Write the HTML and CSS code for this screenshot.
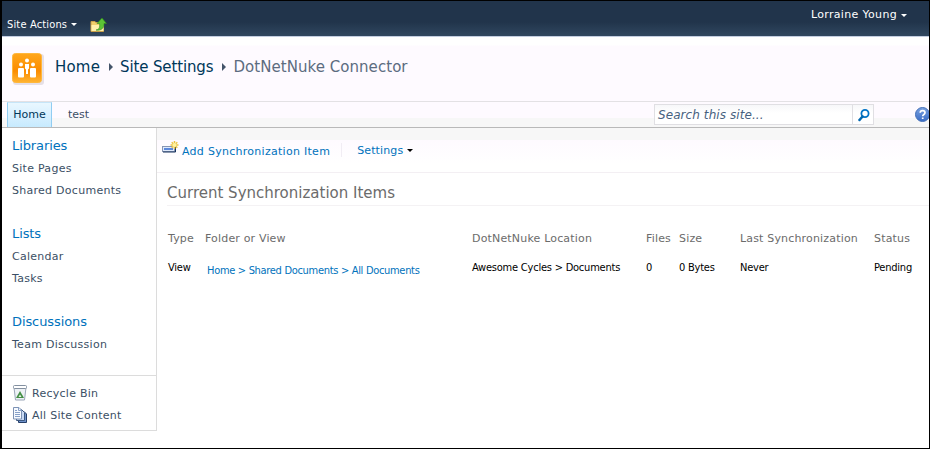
FILE: index.html
```html
<!DOCTYPE html>
<html lang="en">
<head>
<meta charset="utf-8">
<title>DotNetNuke Connector</title>
<link rel="stylesheet" href="styles.css">
</head>
<body>
<div class="window">
  <header class="ribbon">
    <div class="ribbon-left">
      <span class="actions">Site Actions</span><i class="caret"></i>
      <svg class="folder" width="17" height="16" viewBox="0 0 17 16"><path d="M1 4.500h4l1 1h7.500v9H1z" fill="#f0cf6c" stroke="#c8a04a"/><path d="M1.500 8h12v6h-12z" fill="#fff0ac"/><path d="M6 13c3.500-.5 4-3 3.500-6.500H7L12 1l4.500 5.500H14c.5 4.500-3 7.500-8 6.500z" fill="#5cc435" stroke="#2f8a1c" stroke-width=".6"/></svg>
    </div>
    <div class="user"><span>Lorraine Young</span><i class="caret"></i></div>
  </header>
  <div class="title-row">
    <svg class="logo" width="34" height="34" viewBox="0 0 34 34"><defs><linearGradient id="lg" x2="0" y2="1"><stop offset="0" stop-color="#ffa71c"/><stop offset=".6" stop-color="#fb8c00"/><stop offset="1" stop-color="#ffb432"/></linearGradient></defs><rect x="2" y="2" width="31" height="31" rx="3" fill="#e6dfe6"/><rect x="1.500" y="1.500" width="29" height="29" rx="3" fill="url(#lg)" stroke="#ffb73c"/><g fill="#fff"><circle cx="10" cy="12.500" r="2"/><circle cx="22" cy="12.500" r="2"/><circle cx="16" cy="8.500" r="2"/><rect x="7" y="16" width="6" height="9.500" rx="1"/><rect x="19" y="16" width="6" height="9.500" rx="1"/><path d="M14 12h4v4.500l-1 1V22h-2v-4.500l-1-1z"/></g></svg>
    <nav class="crumbs"><a class="c1">Home</a><i class="arrow"></i><a class="c2">Site Settings</a><i class="arrow"></i><span class="c3">DotNetNuke Connector</span></nav>
  </div>
  <div class="tabs">
    <a class="tab active">Home</a><a class="tab test">test</a>
    <div class="search"><span>Search this site...</span><b><svg width="14" height="14" viewBox="0 0 14 14"><circle cx="9" cy="5.500" r="3.600" fill="#fff" stroke="#0072c6" stroke-width="1.800"/><path d="M6.500 8.500 3.500 12" stroke="#0067b0" stroke-width="2.500" stroke-linecap="round"/></svg></b></div>
    <svg class="help" width="14" height="16" viewBox="0 0 14 16"><defs><linearGradient id="hg" x2="0" y2="1"><stop stop-color="#7ba2e0"/><stop offset="1" stop-color="#3a6cc6"/></linearGradient></defs><circle cx="7.500" cy="7.500" r="7" fill="url(#hg)" stroke="#4470b8"/><path d="M5.200 5.800c0-3 4.800-3 4.800 0 0 1.700-2.300 1.700-2.300 3.500M7.700 10.500v1.600" fill="none" stroke="#fff" stroke-width="1.700"/></svg>
  </div>
  <div class="body">
    <aside class="side">
      <div class="groups">
        <h3>Libraries</h3><a>Site Pages</a><a>Shared Documents</a>
        <h3>Lists</h3><a>Calendar</a><a>Tasks</a>
        <h3>Discussions</h3><a>Team Discussion</a>
      </div>
      <div class="tools">
        <a><svg width="16" height="16" viewBox="0 0 16 16"><path d="M2 2.500 3.500 15h9L14 2.500z" fill="#edf1f5" stroke="#9aa6b8"/><rect x="1.500" y=".5" width="13" height="3" rx="1" fill="#fff" stroke="#8390a0"/><path d="M8 6l4 7H4z" fill="#438e45"/><path d="M8 9.500l1.500 2.500h-3z" fill="#e6f1e7"/></svg><span>Recycle Bin</span></a>
        <a><svg width="16" height="16" viewBox="0 0 16 16"><path d="M6.500 4.500H12l2.500 2.500v8.500h-8z" fill="#6f92cc" stroke="#263f68"/><path d="M4.500 2.500h5l3 3v8h-8z" fill="#c9daf4" stroke="#3d587f"/><path d="M1.500.5h5.500l2.500 2.500v9h-8z" fill="#f7faff" stroke="#7d92b4"/><path d="M6.500.5v3h3M3 5.500h5M3 7.500h5M3 9.500h5M3 3.500h2" fill="none" stroke="#86a0c8"/></svg><span>All Site Content</span></a>
      </div>
    </aside>
    <main class="main">
      <div class="toolbar">
        <svg class="add" width="17" height="16" viewBox="0 0 17 16"><rect x=".5" y="6.500" width="12" height="5" fill="#dfe9fb" stroke="#8795b3"/><path d="M1 12h12.500V7" fill="none" stroke="#17325e"/><rect x="2" y="8" width="9" height="2" fill="#5c88dc"/><path d="M12.500 1v8M8.500 5h8M9.700 2.200l5.600 5.600m0-5.600L9.700 7.800" stroke="#ecc443" stroke-width="1.500"/><circle cx="12.500" cy="5" r="2" fill="#fff2a0"/></svg>
        <a class="additem">Add Synchronization Item</a><i class="sep"></i><a class="settings">Settings</a><i class="caret dark"></i>
      </div>
      <h2>Current Synchronization Items</h2>
      <div class="grid head"><span>Type</span><span>Folder or View</span><span>DotNetNuke Location</span><span>Files</span><span>Size</span><span>Last Synchronization</span><span>Status</span></div>
      <div class="grid row"><span>View</span><a>Home &gt; Shared Documents &gt; All Documents</a><span>Awesome Cycles &gt; Documents</span><span>0</span><span>0 Bytes</span><span>Never</span><span>Pending</span></div>
    </main>
  </div>
</div>
</body>
</html>
```
FILE: styles.css
```css
* { box-sizing: border-box; }
body { margin: 0; font: 11px/14px "DejaVu Sans", sans-serif; color: #3b4f65; background: #fff; }
.window { width: 930px; height: 449px; border: solid #000; border-width: 1px 1px 1px 2px; display: flex; flex-direction: column; overflow: hidden; }
.ribbon { height: 36px; flex: none; display: flex; justify-content: space-between; background: linear-gradient(#21344b 60%, #30475f); border-bottom: 1px solid #c3cde0; color: #fff; }
.ribbon-left { display: flex; align-items: center; padding: 12px 0 0 5px; }
.actions { font: 11px/14px "DejaVu Sans Condensed", sans-serif; letter-spacing: .16px; }
.caret { width: 0; height: 0; border: solid transparent; border-width: 3px 3px 0; border-top-color: currentColor; margin-left: 4px; }
.folder { margin: 1px 0 0 13px; }
.user { display: flex; align-items: center; height: 14px; margin: 7px 22px 0 0; letter-spacing: .33px; }
.title-row { height: 65px; flex: none; display: flex; align-items: center; background: linear-gradient(#fff 8px, #fefaff 9px); border-bottom: 1px solid #e3e1e4; padding-left: 9px; }
.logo { margin-top: -1px; }
.crumbs { display: flex; align-items: center; margin: -4px 0 0 10px; font-size: 15px; line-height: 20px; color: #003759; }
.arrow { width: 0; height: 0; border: solid transparent; border-width: 4px 0 4px 4px; border-left-color: #44546a; margin: 0 7px 0 9px; }
.c1 { letter-spacing: .2px; }
.c2 { letter-spacing: -.14px; }
.c3 { color: #5c6c80; letter-spacing: .05px; }
.tabs { height: 26px; flex: none; display: flex; background: linear-gradient(#fefaff 16px, #f7f7f7 16px); border-bottom: 1px solid #b9b9b9; padding-left: 5px; }
.tab { height: 25px; line-height: 26px; }
.active { width: 45px; line-height: 24px; text-align: center; border: 1px solid #91cdf2; border-top-color: #c6e5f8; border-bottom: 0; background: linear-gradient(#e9f7ff, #c7eafe); color: #003759; }
.test { margin-left: 16px; }
.search { margin: 2px 0 0 auto; width: 220px; height: 21px; border: 1px solid #e0dfe3; background: linear-gradient(#f7f7f9, #fff 8px); display: flex; justify-content: space-between; font-size: 12px; line-height: 20px; font-style: italic; color: #476180; letter-spacing: .08px; }
.search span { padding-left: 3px; }
.search b { width: 21px; border-left: 1px solid #e0dfe3; padding: 3px 0 0 3px; line-height: 0; }
.help { margin: 5px 0 0 41px; }
.body { flex: 1; display: flex; align-items: flex-start; min-height: 0; }
.side { width: 155px; height: 303px; border: solid #dcdcdc; border-width: 0 1px 1px 0; flex: none; }
.groups { height: 248px; padding: 7px 0 0 10px; border-bottom: 1px solid #dcdcdc; }
.groups h3 { margin: 21px 0 0; font: 13px/22px "DejaVu Sans", sans-serif; letter-spacing: -.1px; color: #0072bc; }
.groups h3:first-child { margin-top: 0; }
.groups a { display: block; line-height: 22px; letter-spacing: .27px; }
.groups h3 + a { margin-top: 1px; }
.tools { padding: 6px 0 0 10px; }
.tools a { display: flex; align-items: center; height: 22px; gap: 4px; letter-spacing: .26px; }
.tools span { margin-top: 2px; }
.tools svg { margin-top: -1px; }
.main { flex: 1; min-width: 0; }
.toolbar { height: 45px; display: flex; align-items: center; background: linear-gradient(#f7f7f7 12px, #fefaff 12px, #fff 36px); border-bottom: 1px solid #f3eff3; padding-left: 5px; color: #0072bc; }
.add { margin-top: -4px; }
.additem { margin: 3px 0 0 3px; letter-spacing: .28px; }
.sep { width: 1px; height: 14px; background: #f1edf4; margin: 0 15px 0 11px; }
.settings { margin-top: 1px; letter-spacing: .12px; }
.caret.dark { color: #000; }
h2 { margin: 0 0 0 10px; height: 33px; border-bottom: 1px solid #f4f2f4; font: 15px/40px "DejaVu Sans", sans-serif; color: #6b6b6b; }
.grid { display: grid; grid-template-columns: 37px 267px 174px 33px 61px 134px 1fr; padding-left: 11px; white-space: nowrap; }
.head { margin-top: 26px; color: #6b6b6b; letter-spacing: .17px; }
.row { margin-top: 15px; color: #000; font-family: "DejaVu Sans Condensed", sans-serif; letter-spacing: -.22px; }
.row a { color: #0072bc; padding: 3px 0 0 2px; letter-spacing: -.31px; }
```
